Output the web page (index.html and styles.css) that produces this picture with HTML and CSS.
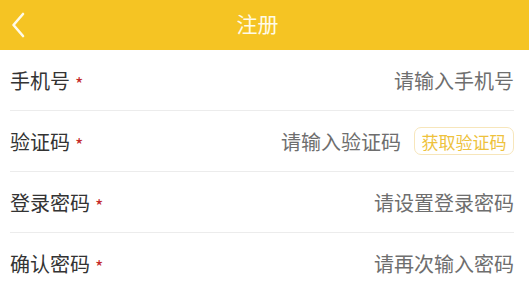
FILE: index.html
```html
<!DOCTYPE html>
<html lang="zh">
<head>
<meta charset="utf-8">
<link rel="stylesheet" href="styles.css">
</head>
<body>
<header class="topbar">
  <span class="back"><svg width="14" height="26" viewBox="0 0 14 26"><path d="M12 2 L2.5 13 L12 24" fill="none" stroke="#fffbe8" stroke-width="2.6" stroke-linecap="round" stroke-linejoin="round"/></svg></span>
  <h1 class="title">注册</h1>
</header>
<main class="form">
  <div class="row">
    <span class="label">手机号<i class="req">*</i></span>
    <span class="ph">请输入手机号</span>
  </div>
  <div class="row">
    <span class="label">验证码<i class="req">*</i></span>
    <span class="right"><span class="ph">请输入验证码</span><span class="code-btn">获取验证码</span></span>
  </div>
  <div class="row">
    <span class="label">登录密码<i class="req">*</i></span>
    <span class="ph">请设置登录密码</span>
  </div>
  <div class="row">
    <span class="label">确认密码<i class="req">*</i></span>
    <span class="ph">请再次输入密码</span>
  </div>
</main>
</body>
</html>
```
FILE: styles.css
```css
html, body {
  margin: 0;
  padding: 0;
  background: #fff;
  font-family: "Noto Sans CJK SC", "Noto Sans", sans-serif;
}
.topbar {
  height: 50px;
  background: #f5c423;
  display: flex;
  align-items: center;
  justify-content: center;
  padding-right: 14px;
  padding-bottom: 3px;
  box-sizing: border-box;
  position: relative;
}
.back {
  position: absolute;
  left: 11px;
  top: 12px;
  display: flex;
}
.title {
  margin: 0;
  font-size: 21px;
  font-weight: normal;
  color: #fffbe8;
  line-height: 1;
}
.form {
  padding: 0 15px 0 10px;
}
.row {
  height: 60px;
  border-bottom: 1px solid #ececec;
  display: flex;
  align-items: center;
  justify-content: space-between;
}
.label {
  font-size: 20px;
  color: #333;
  display: flex;
  align-items: center;
}
.req {
  font-style: normal;
  color: #c42a2a;
  font-size: 18px;
  margin-left: 5px;
  position: relative;
  top: 3px;
}
.ph {
  font-size: 20px;
  color: #6e6e6e;
}
.right {
  display: flex;
  align-items: center;
  gap: 13px;
}
.code-btn {
  box-sizing: border-box;
  width: 100px;
  height: 28px;
  border: 1px solid #f7e6bb;
  border-radius: 7px;
  color: #eec23c;
  font-size: 17px;
  display: flex;
  align-items: center;
  justify-content: center;
}
```
